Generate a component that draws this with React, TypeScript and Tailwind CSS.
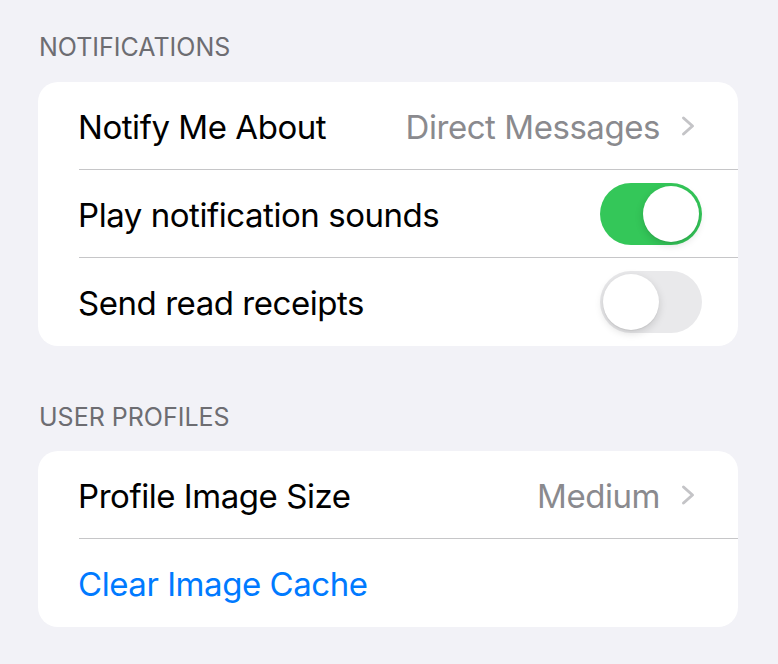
import React from "react";

const font = { fontFamily: 'Inter, "Noto Sans", sans-serif' };

function Chevron() {
  return (
    <svg width="14" height="24" viewBox="0 0 14 24" className="ml-[21px] mr-[7px]">
      <path d="M2.5 4 L11.5 12 L2.5 20" fill="none" stroke="#c4c4c7" strokeWidth="3" strokeLinecap="round" strokeLinejoin="round" />
    </svg>
  );
}

function Toggle({ on }: { on: boolean }) {
  return (
    <div className={`relative w-[102px] h-[62px] rounded-full ${on ? "bg-[#34c759]" : "bg-[#e9e9eb]"}`}>
      <div
        className={`absolute top-[3px] w-[56px] h-[56px] rounded-full bg-white shadow-[0_3px_8px_rgba(0,0,0,0.15),0_1px_1px_rgba(0,0,0,0.06)] ${on ? "left-[43px]" : "left-[3px]"}`}
      />
    </div>
  );
}

function Row({ children, last }: { children: React.ReactNode; last?: boolean }) {
  return (
    <div className="relative h-[88px] flex items-center pl-[40px] pr-[36px]">
      {children}
      {!last && <div className="absolute left-[41px] right-0 bottom-0 h-px bg-[#c6c6c8]" />}
    </div>
  );
}

const txt = "text-[33px] tracking-[-0.45px] pt-[4px]";

export default function App() {
  return (
    <div className="w-[778px] h-[664px] bg-[#f2f2f7] overflow-hidden" style={font}>
      <div className="pt-[31px] pl-[39px] text-[25px] leading-[32px] text-[#6d6d72]">NOTIFICATIONS</div>
      <div className="ml-[38px] mr-[40px] mt-[19px] bg-white rounded-[20px] overflow-hidden">
        <Row>
          <span className={`${txt} text-black`}>Notify Me About</span>
          <div className="ml-auto flex items-center">
            <span className={`${txt} text-[#8a8a8e]`}>Direct Messages</span>
            <Chevron />
          </div>
        </Row>
        <Row>
          <span className={`${txt} text-black`}>Play notification sounds</span>
          <div className="ml-auto">
            <Toggle on />
          </div>
        </Row>
        <Row last>
          <span className={`${txt} text-black`}>Send read receipts</span>
          <div className="ml-auto">
            <Toggle on={false} />
          </div>
        </Row>
      </div>
      <div className="pt-[55px] pl-[39px] text-[25px] leading-[32px] text-[#6d6d72]">USER PROFILES</div>
      <div className="ml-[38px] mr-[40px] mt-[18px] bg-white rounded-[20px] overflow-hidden">
        <Row>
          <span className={`${txt} text-black`}>Profile Image Size</span>
          <div className="ml-auto flex items-center">
            <span className={`${txt} text-[#8a8a8e]`}>Medium</span>
            <Chevron />
          </div>
        </Row>
        <Row last>
          <span className={`${txt} text-[#007aff]`}>Clear Image Cache</span>
        </Row>
      </div>
    </div>
  );
}
